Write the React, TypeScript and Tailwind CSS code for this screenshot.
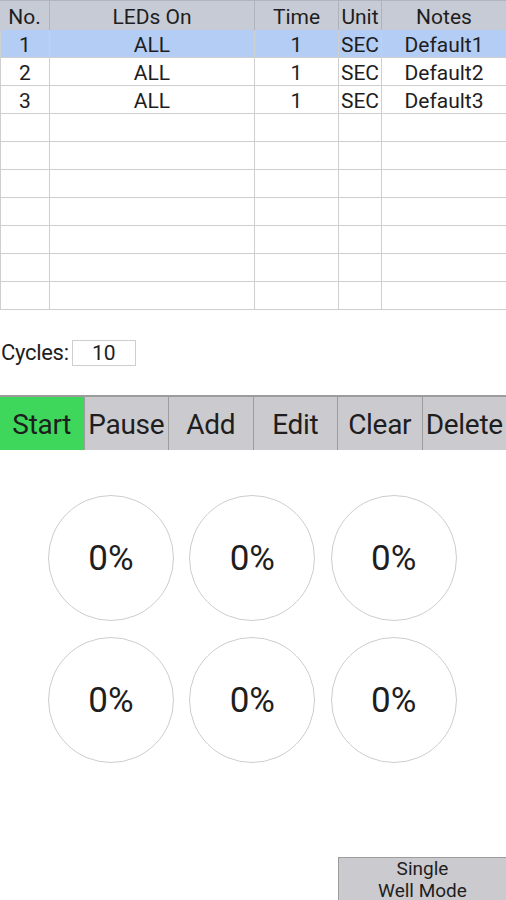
const cols = [
  { key: "no", label: "No.", w: "w-[50px]" },
  { key: "leds", label: "LEDs On", w: "w-[205px]" },
  { key: "time", label: "Time", w: "w-[84px]" },
  { key: "unit", label: "Unit", w: "w-[43px]" },
  { key: "notes", label: "Notes", w: "flex-1" },
];

const rows: string[][] = [
  ["1", "ALL", "1", "SEC", "Default1"],
  ["2", "ALL", "1", "SEC", "Default2"],
  ["3", "ALL", "1", "SEC", "Default3"],
];

const buttons = ["Start", "Pause", "Add", "Edit", "Clear", "Delete"];

export default function App() {
  const allRows = [...rows, ...Array.from({ length: 7 }, () => ["", "", "", "", ""])];

  return (
    <div className="w-[506px] h-[900px] bg-white overflow-hidden relative font-['Roboto',sans-serif] text-[#1e1e1e]">
      {/* table */}
      <div className="w-full">
        <div className="flex h-[30px] bg-[#c7cbd6] border-t border-[#b0b4c0]">
          {cols.map((c, i) => (
            <div
              key={c.key}
              className={`${c.w} flex items-center justify-center pt-[3px] text-[21px] leading-none ${
                i < cols.length - 1 ? "border-r border-[#aeb2bd]" : ""
              }`}
            >
              {c.label}
            </div>
          ))}
        </div>
        {allRows.map((r, ri) => (
          <div
            key={ri}
            className={`flex h-[28px] border-b border-[#cfcfcf] border-l ${
              ri === 0 ? "bg-[#b4cdf5]" : "bg-white"
            }`}
          >
            {r.map((cell, ci) => (
              <div
                key={ci}
                className={`${ci === 0 ? "w-[49px]" : cols[ci].w} flex items-center justify-center pt-[3px] text-[21px] leading-none ${
                  ci < cols.length - 1 ? "border-r border-[#cfcfcf]" : ""
                }`}
              >
                {cell}
              </div>
            ))}
          </div>
        ))}
      </div>

      {/* cycles */}
      <div className="flex items-center h-[28px] mt-[29px] pl-[1px]">
        <span className="text-[22px] leading-none tracking-[-0.3px]">Cycles:</span>
        <div className="ml-[3px] w-[64px] h-[26px] border border-[#cfcfcf] flex items-center justify-center text-[21px] leading-none">
          10
        </div>
      </div>

      {/* control buttons */}
      <div className="flex mt-[28px] h-[55px] border-t-2 border-[#9c9c9c] bg-[#cbcace]">
        {buttons.map((b, i) => (
          <div
            key={b}
            className={`flex-1 flex items-center justify-center pt-[3px] text-[28px] leading-none tracking-[-0.3px] ${
              i === 0 ? "bg-[#3fd75b]" : ""
            } ${i > 0 ? "border-l border-[#9c9c9c]" : ""}`}
          >
            {b}
          </div>
        ))}
      </div>

      {/* wells */}
      <div className="grid grid-cols-3 gap-x-[16px] gap-y-[16px] w-[410px] mx-auto mt-[45px] pr-[2px]">
        {Array.from({ length: 6 }).map((_, i) => (
          <div
            key={i}
            className="w-[126px] h-[126px] rounded-full border border-[#cdcdcd] flex items-center justify-center text-[35px] leading-none"
          >
            0%
          </div>
        ))}
      </div>

      {/* single well mode */}
      <div className="absolute left-[338px] top-[857px] w-[168px] h-[43px] bg-[#cbcace] border-t border-l border-[#9c9c9c] text-center text-[19px] leading-[22px]">
        <span>
          Single
          <br />
          Well Mode
        </span>
      </div>
    </div>
  );
}
